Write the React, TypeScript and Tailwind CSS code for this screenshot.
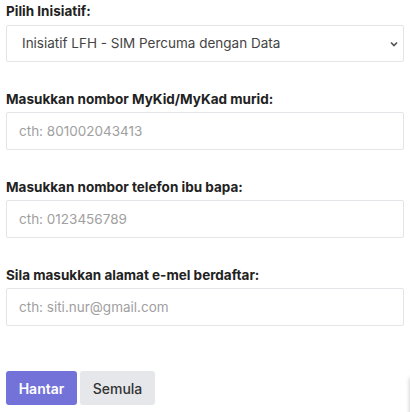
import React from 'react';

const font = { fontFamily: 'Inter, "Noto Sans", sans-serif' };

function Field({ label, placeholder }: { label: string; placeholder: string }) {
  return (
    <div className="flex flex-col mb-[27px]">
      <label className="text-[13.5px] leading-[20px] font-bold text-[#222] mb-[3px]">{label}</label>
      <input
        className="h-[38px] w-full border border-[#e3e4e8] rounded-[2px] px-[12px] text-[13.5px] text-[#333] placeholder:text-[#a0a0a0] outline-none"
        placeholder={placeholder}
      />
    </div>
  );
}

export default function App() {
  return (
    <div className="relative w-[410px] h-[412px] bg-white overflow-hidden" style={font}>
      <div className="px-[6px] pt-[1px]">
        <div className="flex flex-col mb-[27px]">
          <label className="text-[13.5px] leading-[20px] font-bold text-[#222] mb-[4px]">Pilih Inisiatif:</label>
          <div className="relative h-[37px] border border-[#e3e4e8] rounded-[2px] flex items-center pl-[15px] pr-[5px]">
            <span className="text-[13.5px] text-[#444] flex-1">Inisiatif LFH - SIM Percuma dengan Data</span>
            <svg width="8" height="6" viewBox="0 0 8 6">
              <path d="M1 1.5l3 3 3-3" stroke="#555" strokeWidth="1.7" fill="none" />
            </svg>
          </div>
        </div>
        <Field label="Masukkan nombor MyKid/MyKad murid:" placeholder="cth: 801002043413" />
        <Field label="Masukkan nombor telefon ibu bapa:" placeholder="cth: 0123456789" />
        <Field label="Sila masukkan alamat e-mel berdaftar:" placeholder="cth: siti.nur@gmail.com" />
        <div className="flex gap-[3px] mt-[45px]">
          <button className="h-[34px] w-[71px] rounded-[3px] bg-[#7272d8] text-white text-[14px] font-semibold">Hantar</button>
          <button className="h-[34px] w-[75px] rounded-[3px] bg-[#e5e7eb] text-[#333] text-[14px] font-medium">Semula</button>
        </div>
      </div>
      <div className="absolute right-[-6px] top-[378px] w-[6px] h-[40px] shadow-[0_0_4px_rgba(0,0,0,0.25)] bg-white" />
    </div>
  );
}
